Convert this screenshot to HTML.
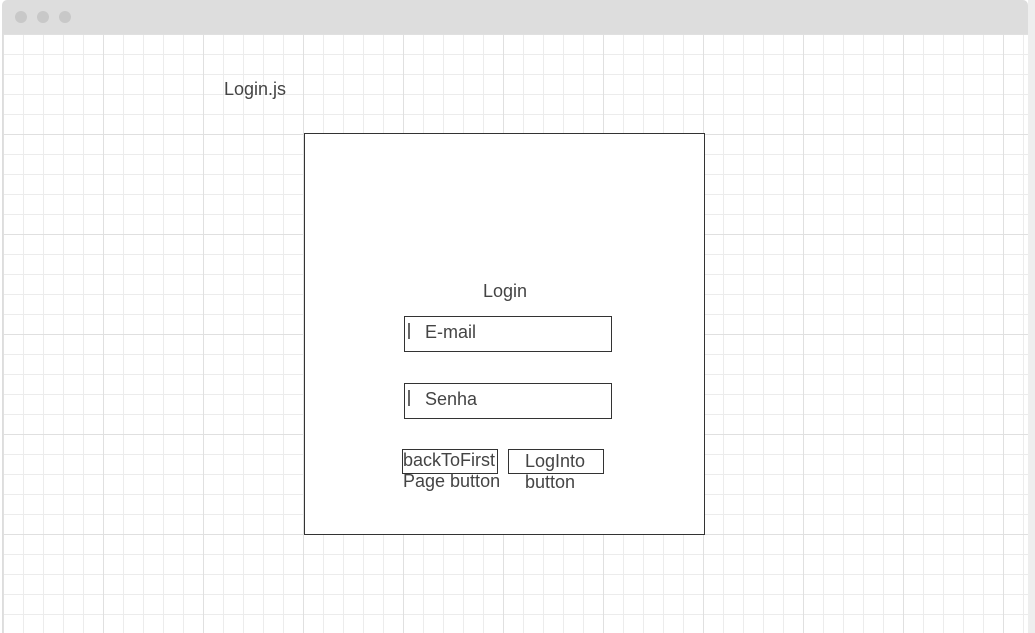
<!DOCTYPE html>
<html><head><style>
html,body{margin:0;padding:0;width:1035px;height:633px;overflow:hidden;background:#fff;font-family:"Liberation Sans",sans-serif;}
.win{position:absolute;left:2px;top:0;width:1026px;height:633px;background:#ddd;border-radius:5px 5px 0 0;}
.bar{position:absolute;left:0;top:0;width:100%;height:34px;}
.dot{position:absolute;top:11px;width:12px;height:12px;border-radius:50%;background:#c8c8c8;}
.grid{position:absolute;left:1px;top:34px;width:1025px;height:599px;background-color:#fff;
background-image:
linear-gradient(to right,#e0e0e0 1px,transparent 1px),
linear-gradient(to bottom,#e0e0e0 1px,transparent 1px),
linear-gradient(to right,#ececec 1px,transparent 1px),
linear-gradient(to bottom,#ececec 1px,transparent 1px);
background-size:100px 100px,100px 100px,20px 20px,20px 20px;
background-position:100px 100px,100px 100px,0px 0px,0px 0px;}
.right{position:absolute;left:1028px;top:0;width:7px;height:633px;background:#eee;}
.t{position:absolute;color:#444;font-size:18px;white-space:nowrap;}
.box{position:absolute;border:1px solid #333;background:#fff;box-sizing:border-box;}
.cur{position:absolute;width:2px;height:16px;background:#666;}
</style></head><body>
<div class="right"></div>
<div class="win">
<div class="bar"><div class="dot" style="left:13px"></div><div class="dot" style="left:35px"></div><div class="dot" style="left:57px"></div></div>
<div class="grid"></div>
</div>
<div class="t" style="left:224px;top:79px">Login.js</div>
<div class="box" style="left:304px;top:133px;width:401px;height:402px"></div>
<div class="t" style="left:483px;top:281px">Login</div>
<div class="box" style="left:404px;top:316px;width:208px;height:36px"></div>
<div class="cur" style="left:408px;top:323px"></div>
<div class="t" style="left:425px;top:322px">E-mail</div>
<div class="box" style="left:404px;top:383px;width:208px;height:36px"></div>
<div class="cur" style="left:408px;top:390px"></div>
<div class="t" style="left:425px;top:389px">Senha</div>
<div class="box" style="left:402px;top:449px;width:96px;height:25px"></div>
<div class="t" style="left:403px;top:450px">backToFirst</div>
<div class="t" style="left:403px;top:471px">Page button</div>
<div class="box" style="left:508px;top:449px;width:96px;height:25px"></div>
<div class="t" style="left:525px;top:451px">LogInto</div>
<div class="t" style="left:525px;top:472px">button</div>
</body></html>
